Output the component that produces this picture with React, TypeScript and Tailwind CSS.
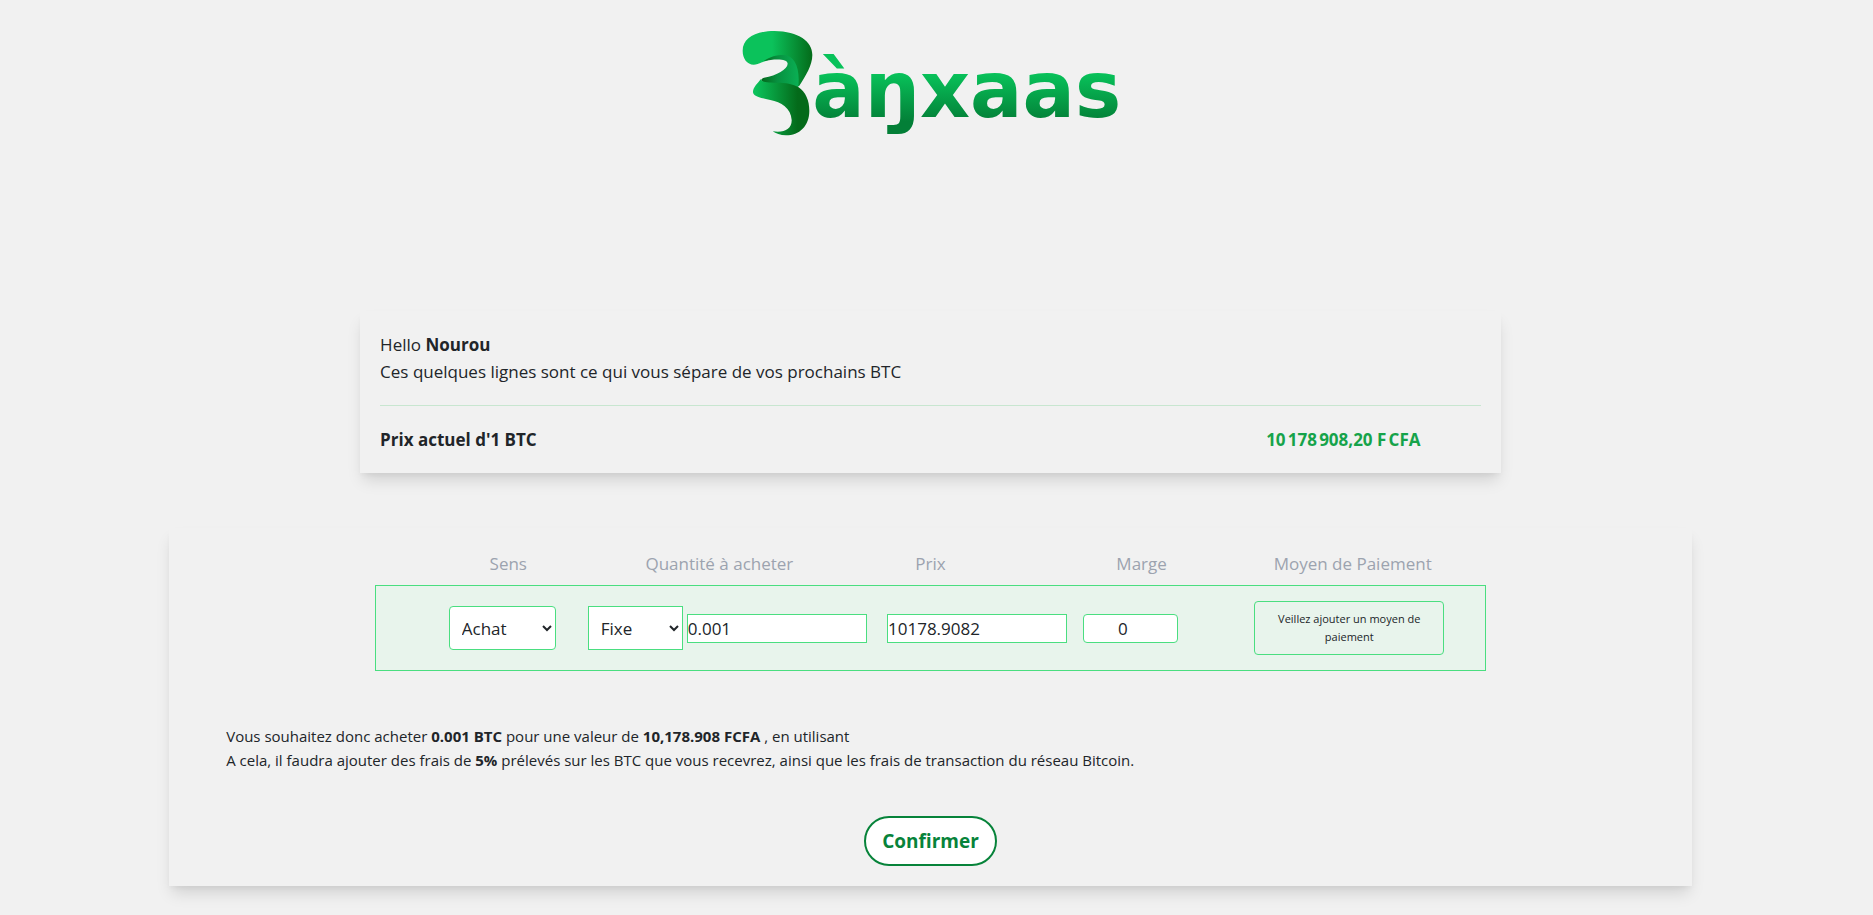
import { useState } from "react";

function Logo() {
  return (
    <svg viewBox="2 0 1260 420" className="w-[420px] h-[140px]" role="img" aria-label="Bànxaas">
      <defs>
        <linearGradient id="top" gradientUnits="userSpaceOnUse" x1="155" y1="0" x2="272" y2="0">
          <stop offset="0" stopColor="#0bc25b" />
          <stop offset="1" stopColor="#046e1c" />
        </linearGradient>
        <linearGradient id="middle" gradientUnits="userSpaceOnUse" x1="122" y1="0" x2="232" y2="0">
          <stop offset="0" stopColor="#04671b" />
          <stop offset="0.45" stopColor="#079140" />
          <stop offset="1" stopColor="#0aae53" />
        </linearGradient>
        <linearGradient id="bottom" gradientUnits="userSpaceOnUse" x1="105" y1="0" x2="232" y2="0">
          <stop offset="0" stopColor="#0bc25b" />
          <stop offset="1" stopColor="#046a1a" />
        </linearGradient>
        <linearGradient id="word" gradientUnits="userSpaceOnUse" x1="0" y1="190" x2="0" y2="335">
          <stop offset="0" stopColor="#08c25a" />
          <stop offset="1" stopColor="#037f37" />
        </linearGradient>
      </defs>
      <path
        fill="url(#top)"
        d="M100 164 C80 163 67 146 67 122 C67 84 105 63 162 63 C235 64 276 94 276 135 C276 166 256 198 236 229 L226 226 L222 170 L192 142 C165 139 147 149 125 157 C115 162 108 164 100 164Z"
      />
      <path
        fill="url(#middle)"
        d="M130 153 C150 140 168 135 190 135 C222 136 240 172 234 230 L226 236 C210 222 175 222 135 219 C120 215 120 206 131 203 C170 196 201 178 202 161 C202 146 165 146 130 153Z"
      />
      <path
        fill="url(#bottom)"
        d="M122 207 C124 217 140 217 168 218 C196 218 218 222 235 232 C256 246 267 272 267 302 C267 348 237 376 197 376 C180 376 166 370 157 364 C192 370 215 356 214 330 C212 294 182 276 150 270 C115 263 98 257 98 246 C98 232 112 220 122 207Z"
      />
      <text x="276" y="320" fontSize="233" fontWeight="700" fontFamily="'DejaVu Sans', sans-serif" fill="url(#word)">
        àŋxaas
      </text>
    </svg>
  );
}

export default function App() {
  const [sens, setSens] = useState("achat");
  const [type, setType] = useState("fixe");
  const [quantite, setQuantite] = useState("0.001");
  const [prix, setPrix] = useState("10178.9082");
  const [marge, setMarge] = useState("0");

  return (
    <div className="min-h-screen bg-[#f1f1f1] pr-3 pb-7 font-['Open_Sans',sans-serif] text-[#212529]">
      <header className="flex justify-center pt-[10px]">
        <a href="/">
          <Logo />
        </a>
      </header>

      <main className="flex flex-col items-center gap-[55px] pt-[161px] text-[17px] leading-[27px]">
        <section className="w-[61.3%] p-5 shadow-[0_10px_15px_-3px_rgba(0,0,0,0.13),0_4px_6px_-2px_rgba(0,0,0,0.05)]">
          <p>
            Hello <strong>Nourou</strong>
          </p>
          <p>Ces quelques lignes sont ce qui vous sépare de vos prochains BTC</p>
          <div className="mt-5 flex border-t border-[#c8e6d0] pt-5 font-bold">
            <h2 className="w-3/4">Prix actuel d'1 BTC</h2>
            <p className="w-1/4 text-center text-[#16a34a]">10&#8239;178&#8239;908,20 F&#8239;CFA</p>
          </div>
        </section>

        <form
          onSubmit={(e) => e.preventDefault()}
          className="flex w-9/11 flex-col items-center pt-[22px] pb-5 shadow-[0_10px_15px_-3px_rgba(0,0,0,0.13),0_4px_6px_-2px_rgba(0,0,0,0.05)]"
        >
          <div className="w-[73%]">
            <div className="grid grid-cols-5 px-7 text-center text-[#9ca3af]">
              <label htmlFor="sens">Sens</label>
              <label htmlFor="quantite">Quantité à acheter</label>
              <label htmlFor="prix">Prix</label>
              <label htmlFor="marge">Marge</label>
              <span>Moyen de Paiement</span>
            </div>

            <div className="mt-2 flex items-center border border-[#4ade80] bg-[#e8f4ec] py-[15px] pr-[41px] pl-[73px]">
              <select
                id="sens"
                value={sens}
                onChange={(e) => setSens(e.target.value)}
                className="mr-8 h-11 w-[107px] shrink-0 rounded border border-[#4ade80] bg-white px-2"
              >
                <option value="achat">Achat</option>
                <option value="vente">Vente</option>
              </select>
              <select
                aria-label="Type de quantité"
                value={type}
                onChange={(e) => setType(e.target.value)}
                className="mr-1 h-11 w-[95px] shrink-0 border border-[#4ade80] bg-white px-2"
              >
                <option value="fixe">Fixe</option>
                <option value="plage">Plage</option>
              </select>
              <input
                id="quantite"
                value={quantite}
                onChange={(e) => setQuantite(e.target.value)}
                className="mr-5 w-0 min-w-0 flex-1 border border-[#4ade80] bg-white"
              />
              <input
                id="prix"
                value={prix}
                onChange={(e) => setPrix(e.target.value)}
                className="mr-4 w-0 min-w-0 flex-1 border border-[#4ade80] bg-white"
              />
              <input
                id="marge"
                value={marge}
                onChange={(e) => setMarge(e.target.value)}
                className="mr-[76px] w-[95px] shrink-0 rounded border border-[#4ade80] bg-white pr-4 text-center"
              />
              <button
                type="button"
                className="w-[190px] shrink-0 rounded border border-[#4ade80] px-4 py-2 text-[11px] leading-[18px]"
              >
                Veillez ajouter un moyen de paiement
              </button>
            </div>
          </div>

          <div className="mt-[53px] w-full px-[57px] text-[15px] leading-6">
            <p>
              Vous souhaitez donc acheter <strong>0.001 BTC</strong> pour une valeur de{" "}
              <strong>10,178.908 FCFA</strong> , en utilisant
            </p>
            <p>
              A cela, il faudra ajouter des frais de <strong>5%</strong> prélevés sur les BTC que vous recevrez, ainsi
              que les frais de transaction du réseau Bitcoin.
            </p>
          </div>

          <button
            type="submit"
            className="mt-11 h-[50px] rounded-full border-2 border-[#07833a] bg-white px-4 text-[19px] font-bold text-[#07833a]"
          >
            Confirmer
          </button>
        </form>
      </main>
    </div>
  );
}
